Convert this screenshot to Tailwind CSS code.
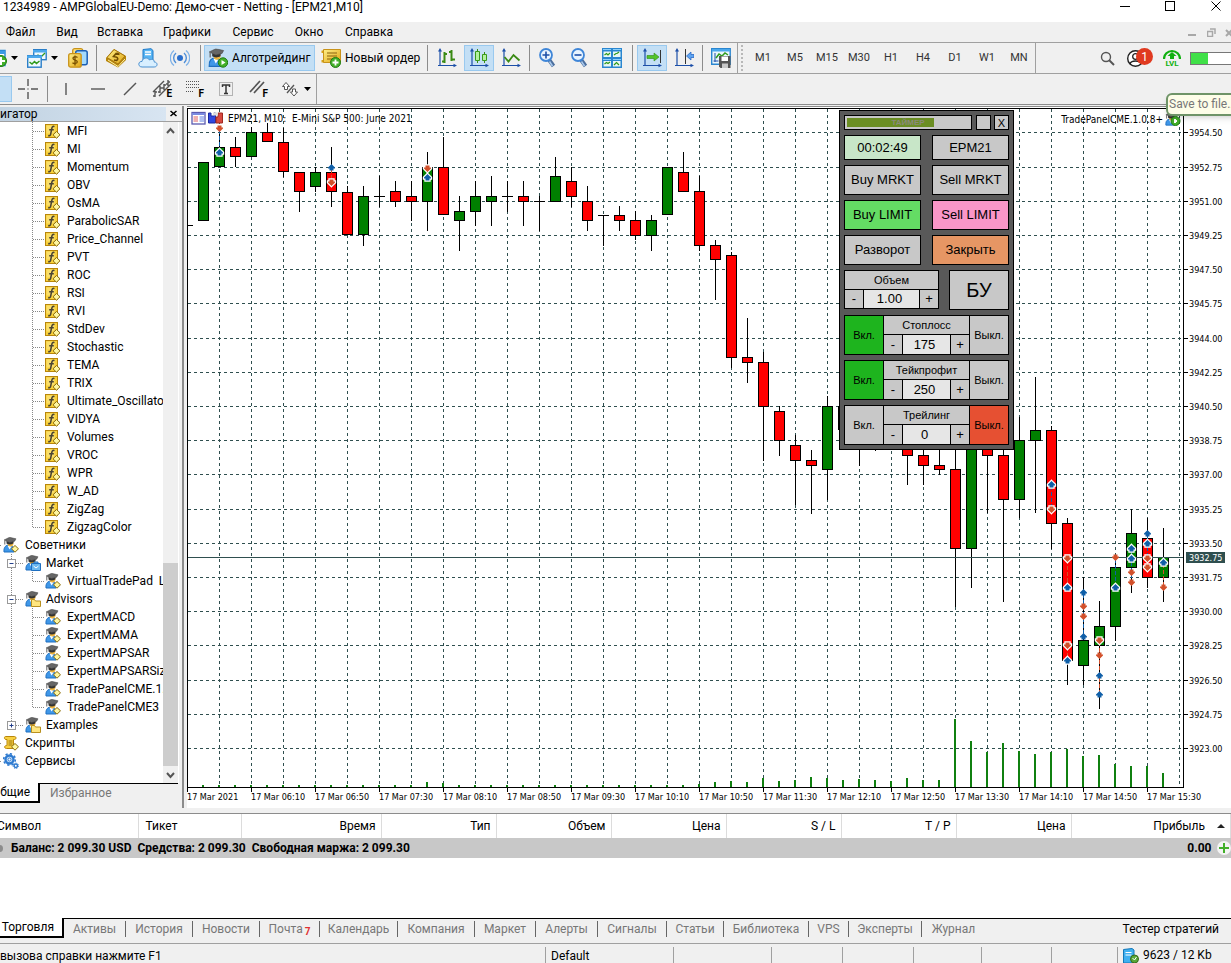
<!DOCTYPE html>
<html lang="ru">
<head>
<meta charset="utf-8">
<meta name="viewport" content="width=device-width, initial-scale=1">
<title>1234989 - AMPGlobalEU-Demo: Демо-счет - Netting - [EPM21,M10]</title>
<script src="https://cdn.jsdelivr.net/npm/@tailwindcss/browser@4"></script>
</head>
<body class="flex h-screen flex-col overflow-hidden bg-[#f0f0f0] font-[Roboto,'Noto_Sans',sans-serif] text-xs text-black">

<!-- icon sprite -->
<svg class="absolute size-0" aria-hidden="true">
  <defs>
    <linearGradient id="gold" x1="0" y1="0" x2="1" y2="1"><stop offset="0" stop-color="#fff08a"/><stop offset="1" stop-color="#e0a412"/></linearGradient>
  </defs>
  <symbol id="fx" viewBox="0 0 16 16">
    <rect x=".5" y="1.5" width="12" height="13" fill="#f8d03a" stroke="#b8860b"/>
    <rect x="1.500" y="2.500" width="8" height="8" fill="#fce88a" opacity=".6"/>
    <path d="M9.5 3.6C7.6 2.8 7 4.3 6.700 6L5.700 11C5.400 12.600 4.500 13 3.200 12.500M4.200 6.700h4.600" fill="none" stroke="#4a4432" stroke-width="1.500"/>
    <path d="M11.500 8.500l3.500 3.300-3.500 3.400L8 11.800z" fill="#fff7a0" stroke="#8a6d10"/>
  </symbol>
  <symbol id="grad" viewBox="0 0 16 16">
    <path d="M1 15c-.5-5 2-7 5-7s5 2 5 7z" fill="#3f97e8" stroke="#1f6fc0"/>
    <path d="M4.500 8.500l2 4 2-3z" fill="#fff"/>
    <circle cx="7.500" cy="6.500" r="2.900" fill="#f0b43c"/>
    <path d="M3.500 4v2.600c2 1.300 5 1.200 7-.3V3.500L7 5z" fill="#333"/>
    <path d="M1 3L6.500 .300l6.500 1.500-1.300 2.400-5.200 1.300z" fill="#666" stroke="#444" stroke-width=".500"/><path d="M1.800 3.500v4" stroke="#666"/>
  </symbol>
  <symbol id="expert" viewBox="0 0 16 16"><use href="#grad"/><path d="M12 8.500l3.500 3.300L12 15.200l-3.500-3.400z" fill="#fff7a0" stroke="#8a6d10"/></symbol>
  <symbol id="expert-folder" viewBox="0 0 16 16"><use href="#grad"/><path d="M6.500 8.500h3l1 1.500h5v5.500h-9z" fill="#ffe680" stroke="#b89020"/></symbol>
  <symbol id="expert-market" viewBox="0 0 16 16"><use href="#grad"/><path d="M6.500 8.500h9v7h-9zM9 8.500V7h4v1.500" fill="#6ab8f0" stroke="#1f6fc0"/><path d="M8.500 11l2.500 2 2.500-2" fill="none" stroke="#fff"/></symbol>
  <symbol id="script" viewBox="0 0 16 16">
    <path d="M2.500 1.500h9c2 0 2 3 0 3h-1v9h-7c-2.500 0-2.500-3 0-3h.5v-6h-1c-2 0-2-3-.5-3z" fill="#f8d040" stroke="#b8860b"/>
    <path d="M5.500 6h4M5.500 8h4M5.500 10h4" stroke="#9a7410"/><path d="M12 8.500l3.500 3.300L12 15.200l-3.500-3.400z" fill="#fff7a0" stroke="#8a6d10"/>
  </symbol>
  <symbol id="gears" viewBox="0 0 16 16">
    <circle cx="6.500" cy="6.500" r="4" fill="#cfe4fa" stroke="#2f7bd0" stroke-width="2.400"/>
    <circle cx="6.500" cy="6.500" r="5.800" fill="none" stroke="#2f7bd0" stroke-width="1.600" stroke-dasharray="2.200 2.300"/>
    <circle cx="6.500" cy="6.500" r="1.500" fill="#fff" stroke="#2f7bd0"/>
    <circle cx="12.800" cy="12.800" r="1.700" fill="#fff" stroke="#2f7bd0" stroke-width="1.500"/>
    <circle cx="12.800" cy="12.800" r="2.700" fill="none" stroke="#2f7bd0" stroke-dasharray="1.200 1.200"/>
  </symbol>
  <symbol id="axes" viewBox="0 0 20 20"><path d="M3 2v16M1 17.500h17" stroke="#1c4fa8" stroke-width="1.200" fill="none"/><path d="M3 0l2 3.500H1zM20 17.500L16.500 15.700v3.600z" fill="#1c4fa8"/></symbol>
  <symbol id="magnifier" viewBox="0 0 20 20">
    <path d="M10.500 11l5 7" stroke="#4c6f9e" stroke-width="4"/><path d="M11.500 13.500l3 4.500" stroke="#a8c8ec" stroke-width="1.500"/>
    <circle cx="8" cy="7" r="6" fill="#e8f4ff" stroke="#3f86d8" stroke-width="1.800"/>
  </symbol>
</svg>

<!-- title bar -->
<header class="flex h-[22px] shrink-0 items-start bg-white">
  <h1 class="pl-[3px] text-xs leading-[15px]">1234989 - AMPGlobalEU-Demo: Демо-счет - Netting - [EPM21,M10]</h1>
  <div class="ml-auto flex h-3 items-center">
    <button aria-label="Свернуть" class="flex w-[45px] justify-center"><svg class="size-3" viewBox="0 0 12 12"><path d="M1 6.500h10" stroke="#000"/></svg></button>
    <button aria-label="Развернуть" class="flex w-[45px] justify-center"><svg class="size-3" viewBox="0 0 12 12"><rect x="1.500" y="1.500" width="9" height="9" fill="none" stroke="#000"/></svg></button>
    <button aria-label="Закрыть окно" class="flex w-[39px] justify-center pl-2"><svg class="size-3" viewBox="0 0 12 12"><path d="M1.500 1.500l9 9M10.500 1.500l-9 9" stroke="#000"/></svg></button>
  </div>
</header>

<!-- menu -->
<nav class="flex h-[21px] shrink-0 items-center border-b border-[#a0a0a0]" aria-label="Меню">
  <button class="w-[41px] text-center">Файл</button>
  <button class="w-[52px] text-center">Вид</button>
  <button class="w-[54px] text-center">Вставка</button>
  <button class="w-[80px] text-center">Графики</button>
  <button class="w-[52px] text-center">Сервис</button>
  <button class="w-[60px] text-center">Окно</button>
  <button class="w-[60px] text-center">Справка</button>
  <div class="ml-auto flex items-center gap-[10px]">
    <svg class="size-[9px]" viewBox="0 0 9 9"><path d="M0 7h8" stroke="#a8a8a8" stroke-width="2"/></svg>
    <svg class="size-[9px]" viewBox="0 0 9 9"><path d="M.500 3.500h5v5h-5zM3 1h5v5" fill="none" stroke="#a8a8a8" stroke-width="1.500"/></svg>
    <svg class="h-[9px] w-[5px] overflow-visible" viewBox="0 0 5 9"><path d="M0 2l6 6M6 2L0 8" stroke="#a8a8a8" stroke-width="2"/></svg>
  </div>
</nav>

<!-- main toolbar -->
<div class="flex h-[31px] shrink-0 items-stretch border-b border-[#a0a0a0]">
  <div class="flex w-[1036px] shrink-0 items-center border-r border-[#a0a0a0]">
    <button aria-label="Новый график" class="flex w-[21px] items-center gap-1">
      <svg class="h-5 w-[7px]" viewBox="13 0 7 20"><path d="M10 2.500h8v15h-8z" fill="#fff" stroke="#2a8ad4" stroke-width="1.500"/><path d="M10 3h8v3h-8z" fill="#3a9ae4"/><circle cx="14" cy="13" r="5.500" fill="#43b02a" stroke="#1f7d12"/><path d="M10 13h8M14 9v8" stroke="#fff" stroke-width="2"/></svg>
      <svg class="h-1 w-[7px]" viewBox="0 0 7 4"><path d="M0 0h7L3.500 4z"/></svg>
    </button>
    <button aria-label="Профили" class="flex w-[42px] items-center gap-1 pl-[6px]">
      <svg class="size-5" viewBox="0 0 20 20"><rect x="6.700" y="1.700" width="12.500" height="10" fill="#eef8ff" stroke="#2a7ec8" stroke-width="1.400"/><path d="M6 2h14v2.500H6z" fill="#4aa8ec"/><path d="M8 10l3-3 3 2 4-4" fill="none" stroke="#2f9a1c" stroke-width="1.300"/><rect x=".700" y="7.700" width="13.500" height="11.500" fill="#eef8ff" stroke="#2a7ec8" stroke-width="1.400"/><path d="M0 7.500h15V10H0z" fill="#4aa8ec"/><path d="M2.500 14l2.500 2 2.500-2.500 2 2 3-2.500" fill="none" stroke="#2f9a1c" stroke-width="1.500"/></svg>
      <svg class="h-1 w-[7px]" viewBox="0 0 7 4"><path d="M0 0h7L3.500 4z"/></svg>
    </button>
    <button aria-label="Обзор рынка" class="flex w-[30px] justify-center">
      <svg class="size-5" viewBox="0 0 20 20"><rect x="4.700" y=".700" width="10" height="12" rx="2" fill="#ffe27a" stroke="#c8921a" stroke-width="1.300"/><rect x="7.700" y="2.700" width="11.500" height="14" rx="2" fill="#a4dafc" stroke="#1c5fb4" stroke-width="1.500"/><rect x=".700" y="5.700" width="12.500" height="13.500" rx="2" fill="url(#gold)" stroke="#c8921a" stroke-width="1.300"/><path d="M9.500 9.500C7.500 8 4.800 8.800 5 10.500s4.300 1.500 4.300 3.300S6 16 4.500 14.700M7 7.500v10" fill="none" stroke="#7a5200" stroke-width="1.300"/></svg>
    </button>
    <span class="flex h-[26px] w-[7px] justify-center"><i class="w-px bg-[#8c8c8c]"></i></span>
    <button aria-label="Котировки" class="flex w-8 justify-center">
      <svg class="size-5" viewBox="0 0 20 20"><path d="M0 10l8-9 12 7v4l-8 7.500L0 13z" fill="#b8860b"/><path d="M1 9.500l7-8 11 6.500-7 8z" fill="url(#gold)" stroke="#a87810"/><path d="M2 12l10 6.500L19 11" fill="none" stroke="#fff3a8"/><path d="M10.500 5L7.500 8.500l2.500.500c2 .500 2.500 2.500.500 3.500L8 12M10.500 5l3 1.500" fill="none" stroke="#704c00" stroke-width="1.600"/></svg>
    </button>
    <button aria-label="Хранилище" class="flex w-8 justify-center">
      <svg class="size-5" viewBox="0 0 20 20"><path d="M5 1.500L13 .700l2 1.800v10H5z" fill="#58b4f2" stroke="#1c78c8"/><path d="M7 4h6M7 6.500h6" stroke="#fff" stroke-width="1.300"/><path d="M4 19c-4.500 0-4-6 0-5.500C4.500 9.500 10 9 11.500 12c3-1.500 5 0 4.700 2 3.800 0 3.800 5 0 5z" fill="#d8efff" stroke="#4a90d0"/></svg>
    </button>
    <button aria-label="Сигналы" class="flex w-8 justify-center">
      <svg class="size-5" viewBox="0 0 20 20" fill="none"><path d="M4 2.500a9.500 9.500 0 000 15M16 2.500a9.500 9.500 0 010 15" stroke="#7fb2e8" stroke-width="1.400"/><path d="M6 5a6.500 6.500 0 000 10M14 5a6.500 6.500 0 010 10" stroke="#4f8fd8" stroke-width="1.400"/><circle cx="10" cy="10" r="3" fill="#2a6ecc"/></svg>
    </button>
    <span class="flex h-[26px] w-2 justify-center"><i class="w-px bg-[#8c8c8c]"></i></span>
    <button class="flex h-[26px] w-[111px] items-center gap-1 border border-[#99c9ef] bg-[#c3dff5] pl-[3px] whitespace-nowrap">
      <svg class="size-5 shrink-0" viewBox="0 0 20 20"><svg width="18" height="20" viewBox="0 0 15 16"><use href="#grad" width="16" height="16"/></svg><circle cx="15" cy="14.500" r="4.700" fill="#43b02a" stroke="#1f7d12"/><path d="M13.500 12v5l4-2.500z" fill="#fff"/></svg>
      Алготрейдинг</button>
    <button class="flex w-[108px] items-center gap-1 pl-[6px] whitespace-nowrap">
      <svg class="size-5 shrink-0" viewBox="0 0 20 20"><path d="M.500 2.500h3v2.500h-3zM.500 12h3v2.500h-3z" fill="#d8a418"/><path d="M2.500 1.500h17v13h-17z" fill="url(#gold)" stroke="#c8921a"/><path d="M6 5h10M6 8h10M6 11h7" stroke="#8a6410" stroke-width="1.200"/><circle cx="14.500" cy="14.500" r="5" fill="#43b02a" stroke="#1f7d12"/><path d="M11.500 14.500h6M14.500 11.500v6" stroke="#fff" stroke-width="1.800"/></svg>
      Новый ордер</button>
    <span class="flex h-[26px] w-2 justify-center"><i class="w-px bg-[#8c8c8c]"></i></span>
    <button aria-label="Бары" class="flex w-8 justify-center"><svg class="size-5" viewBox="0 0 20 20"><use href="#axes"/><path d="M7.500 4v11M5 13.500h2.500M7.500 6H10M14.500 2v11M12 4h2.500M14.500 11.500h3.500" stroke="#3a8a14" stroke-width="2"/></svg></button>
    <button aria-label="Свечи" class="mx-px flex h-[26px] w-[30px] items-center justify-center border border-[#99c9ef] bg-[#c3dff5]"><svg class="size-5" viewBox="0 0 20 20"><use href="#axes"/><path d="M8.500 1v14M15.500 4v11" stroke="#3a8a14"/><path d="M6.500 3.500h4v9h-4zM13.500 6.500h4v6h-4z" fill="#b4f0a0" stroke="#3a9a1a"/></svg></button>
    <button aria-label="Линия" class="flex w-8 justify-center"><svg class="size-5" viewBox="0 0 20 20"><use href="#axes"/><path d="M3.500 9l4 4.500 5-6.500 6 5.500" fill="none" stroke="#3a8a14" stroke-width="1.800"/></svg></button>
    <span class="flex h-[26px] w-[5px] justify-center"><i class="w-px bg-[#8c8c8c]"></i></span>
    <button aria-label="Увеличить" class="flex w-8 justify-center"><svg class="size-5" viewBox="0 0 20 20"><use href="#magnifier"/><path d="M4.500 7h7M8 3.500v7" stroke="#1c4fa8" stroke-width="1.600"/></svg></button>
    <button aria-label="Уменьшить" class="flex w-8 justify-center"><svg class="size-5" viewBox="0 0 20 20"><use href="#magnifier"/><path d="M4.500 7h7" stroke="#1c4fa8" stroke-width="1.600"/></svg></button>
    <button aria-label="Плитка" class="flex w-8 justify-center"><svg class="size-5" viewBox="0 0 20 20"><path d="M0 0h20v20H0z" fill="#2a86d0"/><path d="M1.500 3.500h7.500V9H1.500zM11 3.500h7.500V9H11zM1.500 13h7.500v5.500H1.500zM11 13h7.500v5.500H11z" fill="#e8f8f4"/><path d="M1 1.500h8M11 1.500h8M1 11.500h8M11 11.500h8" stroke="#8cd0fa"/><path d="M2.500 7l2-1.500L6 7l2-2M12 7l2-1.500h1l2-1.500M2.500 16l2-1.500 1.500 1L8 14M12 17l2.500-2.500L17 17" fill="none" stroke="#2f9a1c" stroke-width="1.200"/></svg></button>
    <span class="flex h-[26px] w-2 justify-center"><i class="w-px bg-[#8c8c8c]"></i></span>
    <button aria-label="Автопрокрутка" class="mx-px flex h-[26px] w-[30px] items-center justify-center border border-[#99c9ef] bg-[#c3dff5]"><svg class="size-5" viewBox="0 0 20 20"><use href="#axes"/><path d="M18.500 2v13" stroke="#333"/><path d="M5 7.500h7V5l5 4-5 4v-2.500H5z" fill="#52c42a" stroke="#2f8a14" stroke-width=".600"/></svg></button>
    <button aria-label="Сдвиг графика" class="flex w-8 justify-center"><svg class="size-5" viewBox="0 0 20 20"><use href="#axes"/><path d="M11.500 1v15" stroke="#333"/><path d="M20 6.500h-3V4l-4.500 4 4.500 4V9.500h3z" fill="#5fa4f0" stroke="#1c5fc0" stroke-width=".700"/></svg></button>
    <span class="flex h-[26px] w-[5px] justify-center"><i class="w-px bg-[#8c8c8c]"></i></span>
    <button aria-label="Сохранить шаблон" class="flex w-8 justify-center"><svg class="size-5" viewBox="0 0 20 20"><path d="M.700.700h18.500v15.500H.700z" fill="#eaf6fc" stroke="#2a86d0" stroke-width="1.400"/><path d="M1 1h18v2.500H1z" fill="#4aa8ec"/><path d="M4 5v9M2.500 13h5" stroke="#1c4fa8"/><path d="M5 10l3-4 3 2 3-3 3 2" fill="none" stroke="#2f9a1c" stroke-width="1.500"/><path d="M8 8h11.500v12H9.500L8 18.500z" fill="#555"/><path d="M10.500 8.500h6.500v4.500h-6.500z" fill="#fff"/><path d="M11 15.500h6V20h-6z" fill="#c8c8c8"/></svg></button>
    <div class="flex h-[30px] items-center border-l border-[#a0a0a0] pl-[3px] pr-[4px]"><i class="h-[26px] border-l-2 border-dotted border-[#b8b8b8]"></i></div>
    <div class="flex flex-1 text-[11px] text-[#333]">
      <button class="flex-1">M1</button><button class="flex-1">M5</button><button class="flex-1">M15</button><button class="flex-1">M30</button><button class="flex-1">H1</button><button class="flex-1">H4</button><button class="flex-1">D1</button><button class="flex-1">W1</button><button class="flex-1">MN</button>
    </div>
  </div>
  <div class="ml-auto flex items-center">
    <button aria-label="Поиск"><svg class="size-[15px]" viewBox="0 0 15 15"><circle cx="6" cy="6" r="4.500" fill="none" stroke="#555" stroke-width="1.400"/><path d="M9 9l5 5" stroke="#555" stroke-width="2"/></svg></button>
    <button aria-label="Уведомления" class="relative ml-3 h-[18px] w-[26px]">
      <svg class="size-[17px]" viewBox="0 0 17 17"><circle cx="8.500" cy="8.500" r="7.800" fill="#fff" stroke="#222" stroke-width="1.400"/><circle cx="8.500" cy="6.500" r="2.800" fill="none" stroke="#222" stroke-width="1.300"/><path d="M3 14c1-4 10-4 11 0" fill="none" stroke="#222" stroke-width="1.500"/></svg>
      <span class="absolute -top-px right-0 flex size-[17px] items-center justify-center rounded-full bg-[#e03a20] text-xs text-white">1</span>
    </button>
    <div class="ml-[9px] flex w-5 flex-col items-center text-[#10b010]">
      <svg class="h-3 w-[18px]" viewBox="0 0 18 12"><path d="M1 11a8 8 0 1116 0" fill="none" stroke="currentColor" stroke-width="2.200"/><path d="M9 4l4.500 4H11v3H7V8H4.500z" fill="currentColor"/></svg>
      <span class="text-[8px] leading-2 font-bold">LVL</span>
    </div>
    <div class="ml-2 flex h-[13px] w-[41px] border border-r-0 border-[#777] bg-white"><span class="w-[17px] bg-[#40e048]"></span></div>
  </div>
</div>

<!-- drawing toolbar -->
<div class="flex h-[31px] shrink-0 items-stretch border-b border-[#8c8c8c]">
  <div class="flex items-center border-r border-[#a0a0a0]">
    <button aria-label="Курсор" class="h-[26px] w-3 border border-l-0 border-[#99c9ef] bg-[#c3dff5]"></button>
    <button aria-label="Перекрестие" class="flex w-8 justify-center"><svg class="size-5" viewBox="0 0 20 20"><path d="M10 0v7M10 13v7M0 10h7M13 10h7M9.500 10h1" stroke="#555" stroke-width="1.400"/></svg></button>
    <span class="flex h-[26px] w-[6px] justify-center"><i class="w-px bg-[#8c8c8c]"></i></span>
    <button aria-label="Вертикальная линия" class="flex w-8 justify-center"><svg class="size-5" viewBox="0 0 20 20"><path d="M10 4v12" stroke="#555" stroke-width="1.400"/></svg></button>
    <button aria-label="Горизонтальная линия" class="flex w-8 justify-center"><svg class="size-5" viewBox="0 0 20 20"><path d="M3 10h14" stroke="#555" stroke-width="1.400"/></svg></button>
    <button aria-label="Трендовая линия" class="flex w-8 justify-center"><svg class="size-5" viewBox="0 0 20 20"><path d="M4 16L16 4" stroke="#555" stroke-width="1.400"/></svg></button>
    <button aria-label="Канал" class="flex w-8 justify-center"><span class="relative"><svg class="size-5" viewBox="0 0 20 20"><path d="M1 13L12 2M7 17L19 5M3 12v6M1 17h2M3 13h2M8 7v7M6 13h2M8 9h2M12 5v6M10 9h2M12 6h2M16 1v6M14 5h2M16 3h2" fill="none" stroke="#555" stroke-width="1.400"/></svg><b class="absolute right-0 bottom-0 text-[10px] leading-[10px]">E</b></span></button>
    <button aria-label="Фибоначчи" class="flex w-8 justify-center"><span class="relative"><svg class="size-5" viewBox="0 0 20 20"><path d="M2 2.500h14M2 5.500h14M2 8.500h14M2 12.500h8" stroke="#555" stroke-dasharray="1 1"/></svg><b class="absolute right-0 bottom-0 text-[10px] leading-[10px]">F</b></span></button>
    <button aria-label="Текст" class="flex w-8 justify-center"><svg class="size-5" viewBox="0 0 20 20"><rect x="3.500" y="3.500" width="13" height="13" fill="none" stroke="#777" stroke-dasharray="1 1"/><path d="M6.500 8V6h7v2M10 6v8.500M8 14.500h4" fill="none" stroke="#333" stroke-width="1.500"/></svg></button>
    <button aria-label="Линии Фибоначчи" class="flex w-8 justify-center"><span class="relative"><svg class="size-5" viewBox="0 0 20 20"><path d="M2 13L12 2M6 14L16 3" stroke="#555" stroke-width="1.700"/></svg><b class="absolute right-0 bottom-0 text-[10px] leading-[10px]">F</b></span></button>
    <button aria-label="Фигуры" class="flex w-[42px] items-center gap-1 pl-[6px]"><svg class="size-5" viewBox="0 0 20 20"><path d="M6 3.500l3.500 4H7.500v3h-3v-3h-2z" fill="#fff" stroke="#555"/><path d="M7 14L14 6" stroke="#555" stroke-width="1.300"/><path d="M14 17l-3.500-4h2v-3h3v3h2z" fill="#fff" stroke="#555"/></svg><svg class="h-1 w-[7px]" viewBox="0 0 7 4"><path d="M0 0h7L3.500 4z"/></svg></button>
  </div>
</div>

<!-- workspace -->
<main class="flex min-h-0 flex-1 pt-px">
  <aside class="flex w-[184px] shrink-0 flex-col border-r-2 border-[#8c8c8c]">
    <div class="flex h-4 shrink-0 items-center border-b border-[#a0a0a0]">
      <h2 class="h-[14px] w-[166px] bg-linear-to-r from-[#c2d3e2] to-[#d8e5f2] text-xs leading-[14px]">игатор</h2>
      <button aria-label="Закрыть навигатор" class="ml-1"><svg class="size-[7px]" viewBox="0 0 7 7"><path d="M.500 1l6 5M6.500 1l-6 5" stroke="#000" stroke-width="1.600"/></svg></button>
    </div>
    <div class="mr-[3px] flex min-h-0 flex-1 bg-white">
      <ul id="tree" class="min-w-0 flex-1 overflow-hidden"></ul>
      <div class="mr-px flex w-[15px] shrink-0 flex-col items-center bg-[#f0f0f0]">
        <svg class="mt-[5px] h-2 w-[9px] shrink-0" viewBox="0 0 9 8"><path d="M1 6l3.500-4L8 6" fill="none" stroke="#555" stroke-width="2"/></svg>
        <span class="mt-auto h-[203px] w-full shrink-0 bg-[#cdcdcd]"></span>
        <svg class="mt-[5px] mb-1 h-2 w-[9px] shrink-0" viewBox="0 0 9 8"><path d="M1 2l3.500 4L8 2" fill="none" stroke="#555" stroke-width="2"/></svg>
      </div>
    </div>
    <div class="mr-1 flex h-[25px] shrink-0">
      <button class="h-5 w-10 border-r-2 border-b-2 border-black bg-white pr-2 text-right leading-[17px]">бщие</button>
      <button class="h-5 flex-1 border-t border-black pl-[10px] text-left leading-[17px] text-[#777]">Избранное</button>
    </div>
  </aside>

  <section class="relative ml-[3px] min-w-0 flex-1 overflow-hidden border-t border-[#8c8c8c] bg-white" aria-label="График EPM21">
    <svg id="chart" class="block h-[700px] w-[1044px] font-['DejaVu_Sans_Condensed','DejaVu_Sans',sans-serif] text-[9px]" viewBox="187 107 1044 700" shape-rendering="crispEdges"></svg>

    <!-- trading panel -->
    <div class="absolute top-[3px] left-[652px] flex w-[175px] flex-col gap-[5px] border border-black bg-[#595959] p-1 font-['Liberation_Sans',sans-serif] text-[13px] text-black">
      <div class="flex h-[15px]">
        <div class="relative mr-[4px] w-[128px] border border-black bg-[#c8c8c8] p-[2px]"><div class="h-full w-[87px] bg-[#6b8e23]"></div><span class="absolute inset-0 text-center text-[8px] leading-[13px] font-bold text-[#8a8a7a]">ТАЙМЕР</span></div>
        <button aria-label="Свернуть панель" class="mr-[3px] w-[15px] border border-black bg-[#c8c8c8]"></button>
        <button class="w-[15px] border border-black bg-[#c8c8c8] text-[11px] leading-[12px]">X</button>
      </div>
      <div class="grid grid-cols-2 gap-x-[11px] gap-y-[5px]">
        <div class="h-[25px] border border-black bg-[#c8e6c8] text-center leading-[23px]">00:02:49</div>
        <button class="h-[25px] border border-black bg-[#c8c8c8]">EPM21</button>
        <button class="h-[30px] border border-black bg-[#c8c8c8]">Buy MRKT</button>
        <button class="h-[30px] border border-black bg-[#c8c8c8]">Sell MRKT</button>
        <button class="h-[30px] border border-black bg-[#64dc64]">Buy LIMIT</button>
        <button class="h-[30px] border border-black bg-[#fa96c8]">Sell LIMIT</button>
        <button class="h-[30px] border border-black bg-[#c8c8c8]">Разворот</button>
        <button class="h-[30px] border border-black bg-[#e69664]">Закрыть</button>
      </div>
      <div class="flex justify-between">
        <div class="h-[39px] w-[95px] border border-black bg-[#c8c8c8]">
          <label for="vol" class="block h-[19px] border-b border-black text-center text-[11px] leading-[18px]">Объем</label>
          <div class="flex h-[18px]"><button class="w-[18px] shrink-0 leading-4">-</button><input id="vol" value="1.00" class="min-w-0 flex-1 border-x border-black bg-[#e6e6e6] pr-1 text-center"><button class="w-[18px] shrink-0 leading-4">+</button></div>
        </div>
        <button class="h-10 w-[60px] border border-black bg-[#c8c8c8] text-xl leading-9">БУ</button>
      </div>
      <div class="flex h-10 border border-black bg-[#c8c8c8] text-[11px]">
        <button class="w-[39px] shrink-0 border-r border-black bg-[#1eb41e]">Вкл.</button>
        <div class="min-w-0 flex-1"><label for="sl" class="block h-[19px] border-b border-black text-center leading-[18px]">Стоплосс</label>
          <div class="flex h-[19px] text-[13px]"><button class="w-[18px] shrink-0 leading-4">-</button><input id="sl" value="175" class="min-w-0 flex-1 border-x border-black bg-[#e6e6e6] pr-1 text-center"><button class="w-[18px] shrink-0 leading-4">+</button></div></div>
        <button class="w-[39px] shrink-0 border-l border-black">Выкл.</button>
      </div>
      <div class="flex h-10 border border-black bg-[#c8c8c8] text-[11px]">
        <button class="w-[39px] shrink-0 border-r border-black bg-[#1eb41e]">Вкл.</button>
        <div class="min-w-0 flex-1"><label for="tp" class="block h-[19px] border-b border-black text-center leading-[18px]">Тейкпрофит</label>
          <div class="flex h-[19px] text-[13px]"><button class="w-[18px] shrink-0 leading-4">-</button><input id="tp" value="250" class="min-w-0 flex-1 border-x border-black bg-[#e6e6e6] pr-1 text-center"><button class="w-[18px] shrink-0 leading-4">+</button></div></div>
        <button class="w-[39px] shrink-0 border-l border-black">Выкл.</button>
      </div>
      <div class="flex h-10 border border-black bg-[#c8c8c8] text-[11px]">
        <button class="w-[39px] shrink-0 border-r border-black">Вкл.</button>
        <div class="min-w-0 flex-1"><label for="ts" class="block h-[19px] border-b border-black text-center leading-[18px]">Трейлинг</label>
          <div class="flex h-[19px] text-[13px]"><button class="w-[18px] shrink-0 leading-4">-</button><input id="ts" value="0" class="min-w-0 flex-1 border-x border-black bg-[#e6e6e6] pr-1 text-center"><button class="w-[18px] shrink-0 leading-4">+</button></div></div>
        <button class="w-[39px] shrink-0 border-l border-black bg-[#e65032]">Выкл.</button>
      </div>
    </div>
  </section>
</main>

<!-- hover hint -->
<div role="tooltip" class="absolute top-[93px] -right-2 h-[23px] w-[73px] rounded-md border-2 border-[#6f9468] bg-[#fdfde8] pl-px text-xs leading-[19px] whitespace-nowrap text-[#777] shadow-md">Save to file...</div>

<!-- trade list -->
<section class="mt-[5px] h-[105px] shrink-0 border-t border-[#8c8c8c] bg-white" aria-label="Торговля">
  <table class="w-full table-fixed border-collapse">
    <colgroup><col class="w-[138px]"><col class="w-[103px]"><col class="w-[140px]"><col class="w-[115px]"><col class="w-[115px]"><col class="w-[115px]"><col class="w-[115px]"><col class="w-[115px]"><col class="w-[115px]"><col></colgroup>
    <thead>
      <tr class="h-6 *:border-r *:border-[#dcdcdc] *:pr-[5px] *:text-right *:font-normal">
        <th class="overflow-hidden"><div class="-ml-[3px] text-left">Символ</div></th><th><div class="pl-[7px] text-left">Тикет</div></th><th>Время</th><th>Тип</th><th>Объем</th><th>Цена</th><th>S / L</th><th>T / P</th><th>Цена</th>
        <th><div class="flex items-center justify-end gap-3">Прибыль<svg class="h-1 w-2" viewBox="0 0 8 4"><path d="M0 4h8L4 0z" fill="#222"/></svg></div></th>
      </tr>
    </thead>
    <tbody>
      <tr class="h-5 bg-[#c8c8c8] font-bold">
        <td colspan="9"><div class="flex items-center gap-2"><i class="-ml-1 size-[7px] rounded-full bg-[#8c8c8c]"></i><span class="whitespace-pre">Баланс: 2 099.30 USD  Средства: 2 099.30  Свободная маржа: 2 099.30</span></div></td>
        <td><div class="flex items-center justify-end gap-[5px]">0.00<svg class="size-[14px]" viewBox="0 0 14 14"><circle cx="7" cy="7" r="7" fill="#f4f4f4"/><path d="M7 2v10M2 7h10" stroke="#43b02a" stroke-width="2"/></svg></div></td>
      </tr>
    </tbody>
  </table>
</section>

<!-- terminal tabs -->
<nav class="flex h-[26px] shrink-0 items-start border-b border-[#a0a0a0]" aria-label="Вкладки терминала">
  <button class="h-5 w-16 border-r-2 border-b-2 border-black bg-white pr-2 text-right leading-[18px]">Торговля</button>
  <div class="flex h-5 flex-1 items-center border-t border-black text-[#777]">
    <button class="h-4 w-[62px] border-r border-[#666] leading-4">Активы</button>
    <button class="h-4 w-[67px] border-r border-[#666] leading-4">История</button>
    <button class="h-4 w-[67px] border-r border-[#666] leading-4">Новости</button>
    <button class="h-4 w-[60px] border-r border-[#666] leading-4">Почта<sub class="pl-[2px] text-[10px] leading-3 font-bold text-[#e03030]">7</sub></button>
    <button class="h-4 w-[78px] border-r border-[#666] leading-4">Календарь</button>
    <button class="h-4 w-[77px] border-r border-[#666] leading-4">Компания</button>
    <button class="h-4 w-[61px] border-r border-[#666] leading-4">Маркет</button>
    <button class="h-4 w-[62px] border-r border-[#666] leading-4">Алерты</button>
    <button class="h-4 w-[69px] border-r border-[#666] leading-4">Сигналы</button>
    <button class="h-4 w-[57px] border-r border-[#666] leading-4">Статьи</button>
    <button class="h-4 w-[85px] border-r border-[#666] leading-4">Библиотека</button>
    <button class="h-4 w-[40px] border-r border-[#666] leading-4">VPS</button>
    <button class="h-4 w-[73px] border-r border-[#666] leading-4">Эксперты</button>
    <button class="h-4 w-[63px] leading-4">Журнал</button>
    <button class="ml-auto pr-3 leading-4 text-black">Тестер стратегий</button>
  </div>
</nav>

<!-- status bar -->
<footer class="flex h-[19px] shrink-0 items-end leading-[13px] whitespace-nowrap">
  <span class="w-[545px]">вызова справки нажмите F1</span>
  <span class="h-4 w-[128px] border-l border-[#a0a0a0] pt-[3px] pl-[5px]">Default</span>
  <span class="h-4 w-[98px] border-l border-[#a0a0a0]"></span>
  <span class="h-4 w-[71px] border-l border-[#a0a0a0]"></span>
  <span class="h-4 w-[71px] border-l border-[#a0a0a0]"></span>
  <span class="h-4 w-[68px] border-l border-[#a0a0a0]"></span>
  <span class="h-4 w-[70px] border-l border-[#a0a0a0]"></span>
  <span class="h-4 w-[66px] border-l border-[#a0a0a0]"></span>
  <span class="flex h-4 flex-1 items-center gap-1 border-l border-[#a0a0a0] pl-[5px]"><svg class="h-[15px] w-4" viewBox="0 0 16 15"><path d="M.500 1.500L9 .500l2 1.500v13H.500z" fill="#3fb0f0" stroke="#1478b8"/><path d="M2.500 4.500h6M2.500 7h6" stroke="#fff"/><circle cx="11.500" cy="11" r="4" fill="#58a838" stroke="#386818"/><path d="M9.500 10l2 2 2-3" fill="none" stroke="#fff"/></svg>9623 / 12 Kb</span>
</footer>

<script>
// ---- navigator tree: [level, icon, label, expander, last child, inside the experts branch]
const indicators = ['MFI','MI','Momentum','OBV','OsMA','ParabolicSAR','Price_Channel','PVT','ROC','RSI','RVI','StdDev','Stochastic','TEMA','TRIX','Ultimate_Oscillato','VIDYA','Volumes','VROC','WPR','W_AD','ZigZag','ZigzagColor'];
const rows = indicators.map((n, i) => [3, 'fx', n, '', i === indicators.length - 1, false]);
rows.push([1,'expert','Советники'],
  [2,'expert-market','Market','-',false,true],[3,'expert','VirtualTradePad  L','',true,true],
  [2,'expert-folder','Advisors','-',false,true],
  ...['ExpertMACD','ExpertMAMA','ExpertMAPSAR','ExpertMAPSARSize','TradePanelCME.1.','TradePanelCME3'].map((n,i)=>[3,'expert',n,'',i===5,true]),
  [2,'expert-folder','Examples','+',true,true],[1,'script','Скрипты'],[1,'gears','Сервисы']);
const padding = {1:'pl-[3px] gap-[6px]', 2:'pl-[25px] gap-[5px]', 3:'pl-[45px] gap-[6px]'};
document.getElementById('tree').innerHTML = rows.map(([lvl, icon, name, exp, last, branch]) => {
  let d = '';
  if (lvl === 3) d += `M32.500 0V${last ? 10 : 18}M33 9.500H44`;
  if (lvl === 2) d += 'M12 9.500H23';
  if (branch) d += (lvl === 2 && last) ? 'M11.500 0V10' : 'M11.500 0V18';
  if (lvl === 1) d += 'M0 9.500H2';
  const box = exp ? `<rect x="7.500" y="5.500" width="8" height="8" fill="#fff" stroke="#999"/><path d="M9.500 9.500h4${exp === '+' ? 'M11.500 7.500v4' : ''}" stroke="#24408c"/>` : '';
  return `<li class="relative flex h-[18px] items-center whitespace-pre ${padding[lvl]}"><svg class="absolute top-0 left-0 h-[18px] w-11" viewBox="0 0 44 18"><path d="${d}" stroke="#888" stroke-dasharray="1 1"/>${box}</svg><svg class="relative size-4 shrink-0"><use href="#${icon}"/></svg>${name}</li>`;
}).join('');

// ---- chart: [x, high, top, bottom, low, up?]
const candles = [
[203,162,162,221,221,1],[219,132,147,167,167,1],[235,137,147,157,167,0],[251,127,132,157,157,1],[267,123,132,142,142,0],[283,128,142,172,177,0],[299,172,172,192,212,0],[315,167,172,187,192,1],[331,147,172,192,207,0],[347,186,192,235,235,0],[363,186,196,235,246,1],[379,176,196,196,207,1],[395,181,191,202,207,0],[411,181,196,202,221,0],[427,152,167,202,231,1],[443,137,167,215,215,0],[459,196,211,221,251,1],[475,181,196,212,226,1],[491,176,196,202,226,1],[507,181,196,196,212,1],[523,181,196,202,226,0],[539,196,201,201,231,1],[555,157,176,202,202,1],[571,167,181,197,207,0],[587,186,201,221,231,0],[603,215,215,215,246,1],[619,206,215,221,231,0],[635,211,220,236,240,0],[651,215,220,236,251,1],[667,167,167,215,215,1],[683,152,172,192,192,0],[699,176,191,246,251,0],[715,240,245,260,300,0],[731,252,255,358,368,0],[747,318,357,363,383,0],[763,352,362,407,461,0],[779,406,411,441,456,0],[795,435,445,461,505,0],[811,450,460,466,514,0],[827,396,406,470,500,1],[843,406,406,430,430,1],[859,440,440,440,466,1],[875,440,440,440,451,1],[907,440,440,456,485,0],[923,440,455,466,485,0],[939,440,465,470,475,0],[955,440,469,549,607,0],[971,430,430,549,588,1],[987,430,430,456,513,0],[1003,430,455,500,602,0],[1019,417,440,500,518,1],[1035,377,430,441,513,1],[1051,426,430,524,549,0],[1067,518,523,661,685,0],[1083,577,640,666,685,1],[1099,601,626,646,709,1],[1115,558,567,627,641,1],[1131,509,533,568,593,1],[1147,518,538,578,588,0],[1163,528,557,578,602,1]];
const vol = {427:782,443:783,699:784,715:782,731:781,747:782,763:778,779:781,795:780,811:777,827:778,843:780,859:779,875:780,891:781,907:778,923:780,939:780,955:719,971:741,987:752,1003:743,1019:751,1035:754,1051:752,1067:749,1083:756,1099:755,1115:764,1131:766,1147:766,1163:773};
const prices = [[132,'3954.50'],[167,'3952.75'],[201,'3951.00'],[235,'3949.25'],[269,'3947.50'],[303,'3945.75'],[338,'3944.00'],[372,'3942.25'],[406,'3940.50'],[440,'3938.75'],[474,'3937.00'],[509,'3935.25'],[543,'3933.50'],[577,'3931.75'],[611,'3930.00'],[645,'3928.25'],[680,'3926.50'],[714,'3924.75'],[748,'3923.00']];
const times = ['17 Mar 2021','17 Mar 06:10','17 Mar 06:50','17 Mar 07:30','17 Mar 08:10','17 Mar 08:50','17 Mar 09:30','17 Mar 10:10','17 Mar 10:50','17 Mar 11:30','17 Mar 12:10','17 Mar 12:50','17 Mar 13:30','17 Mar 14:10','17 Mar 14:50','17 Mar 15:30'];
// deal marks: [x, y, buy?, outlined?]
const marks = [[219,128,0,0],[219,152,1,1],[331,167,1,0],[331,182,0,1],[427,168,0,1],[427,177,1,1],[1051,484,1,1],[1051,509,0,1],[1067,558,0,1],[1067,587,1,1],[1067,645,0,1],[1067,660,1,1],[1083,592,1,0],[1083,606,0,0],[1083,616,0,0],[1083,636,1,0],[1099,640,0,1],[1099,655,0,0],[1099,675,1,0],[1099,694,1,0],[1115,557,0,0],[1115,587,1,1],[1131,548,1,1],[1131,558,1,1],[1131,572,0,0],[1131,582,0,0],[1147,533,1,0],[1147,543,1,1],[1147,558,0,1],[1147,567,0,1],[1163,562,1,1],[1163,587,0,0]];
const links = [[219,130,150,1],[331,169,180,0],[427,168,177,0],[1051,486,507,1],[1067,560,585,0],[1067,647,659,0],[1083,594,634,1],[1099,642,692,0],[1115,559,585,1],[1131,550,580,1],[1147,535,566,1],[1163,564,585,0]];

let s = '';
for (const [y] of prices) s += `<path d="M188 ${y}.500H1183" stroke="#2f4f4f" stroke-dasharray="3 3"/>`;
for (let x = 219; x <= 1179; x += 32) s += `<path d="M${x}.500 109V787" stroke="#2f4f4f" stroke-dasharray="3 3"/>`;
for (let x = 203; x <= 1163; x += 16) { const t = vol[x] || 785; s += `<rect x="${x - 1}" y="${t}" width="2" height="${787 - t}" fill="#108010"/>`; }
s += '<path d="M188 225.500h5" stroke="#000"/>';
for (const [x, h, t, b, l, up] of candles) {
  s += `<path d="M${x}.500 ${h}V${l}" stroke="#000"/>`;
  s += t === b ? `<path d="M${x - 5} ${t}.500h11" stroke="#000"/>` : `<rect x="${x - 4.5}" y="${t + .5}" width="10" height="${b - t - 1}" fill="${up ? '#008000' : '#ff0000'}" stroke="#000"/>`;
}
s += '<path d="M188 557.500H1183" stroke="#2f4f4f"/>';
for (const [x, a, b, c] of links) s += `<path d="M${x}.500 ${a}V${b}" stroke="${c ? '#0f5fa8' : '#d2502b'}" stroke-dasharray="4 2"/>`;
for (const [x, y, up, out] of marks) {
  const g = up ? 'M0-3.500L3.500 0V1H2V3H-2V1H-3.500V0z' : 'M0 3.500L3.500 0V-1H2V-3H-2V-1H-3.500V0z';
  s += `<path shape-rendering="auto" transform="translate(${x + .5} ${y + .5})" d="${g}" fill="${up ? '#0f5fa8' : '#d2502b'}" ${out ? 'stroke="#fff" stroke-width="2.400" paint-order="stroke"' : ''}/>`;
}
s += '<path d="M187.500 791V108.500H1183.500V787.500H187" fill="none" stroke="#000"/>';
for (const [y, p] of prices) s += `<path d="M1184 ${y}.500h4" stroke="#000"/><text x="1189" y="${y + 4}">${p}</text>`;
s += '<rect x="1186" y="552" width="39" height="11" fill="#2f4f4f"/><text x="1189" y="561" fill="#fff">3932.75</text>';
times.forEach((t, i) => { const x = 187 + i * 64; s += `<path d="M${x}.500 788v4" stroke="#000"/><text x="${x}" y="800">${t}</text>`; });
s += '<g class="text-[10px]"><text x="228" y="122" xml:space="preserve">EPM21, M10:  E-Mini S&amp;P 500: June 2021</text><text x="1163" y="123" text-anchor="end">TradePanelCME.1.0.8+</text></g>';
s += '<g shape-rendering="auto"><rect x="192" y="112.500" width="13" height="11.500" fill="#fff" stroke="#5a5ab0" stroke-width="1.300"/><path d="M192 114h13" stroke="#7a8ae0" stroke-width="2"/><path d="M193.500 117h4.500M193.500 119h4.500M193.500 121h4.500" stroke="#e06060"/><path d="M199.500 117h4.500M199.500 119h4.500M199.500 121h4.500" stroke="#6080e0"/><path d="M208.500 113h2.500v3h3v-3h1.500v10h-7z" fill="#3048e0" stroke="#1828a0"/><path d="M216 117h2v-4h4.500v10H216z" fill="#d84840" stroke="#a02820"/><path d="M213 112.500h5v3h-5z" fill="#ddd"/></g>';
s += '<svg x="1165" y="112" width="14" height="14" viewBox="0 0 16 16" shape-rendering="auto"><use href="#grad" width="16" height="16"/></svg><circle cx="1175.500" cy="121" r="4.500" fill="#43b02a" stroke="#1f7d12" shape-rendering="auto"/><path d="M1174 118.500v5l4-2.500z" fill="#fff"/>';
document.getElementById('chart').innerHTML = s;
</script>
</body>
</html>
